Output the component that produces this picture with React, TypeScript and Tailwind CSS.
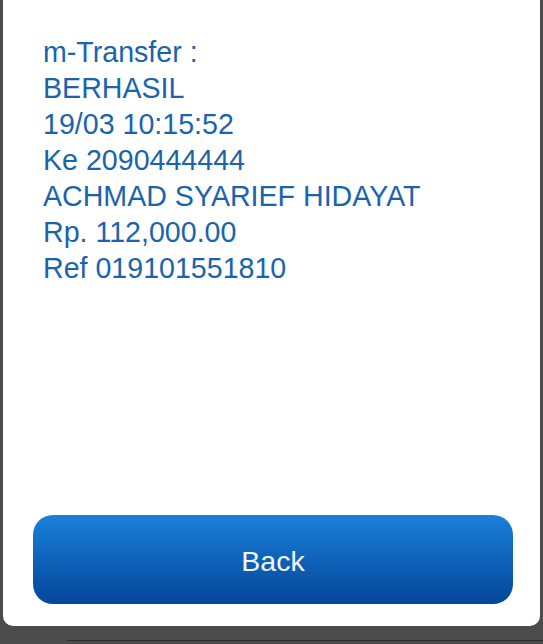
import React from 'react';

const lines = [
  'm-Transfer :',
  'BERHASIL',
  '19/03 10:15:52',
  'Ke 2090444444',
  'ACHMAD SYARIEF HIDAYAT',
  'Rp. 112,000.00',
  'Ref 019101551810',
];

export default function App() {
  return (
    <div className="w-[543px] h-[644px] bg-[#4b4b4b] flex flex-col overflow-hidden font-['Liberation_Sans',Arial,sans-serif]">
      <div className="ml-[3px] mr-[3px] h-[626px] bg-white rounded-b-[10px] flex flex-col">
        <div className="pt-[34px] pl-[40px] text-[28.6px] leading-[36px] text-[#1a64ae]">
          {lines.map((line) => (
            <div key={line}>{line}</div>
          ))}
        </div>
        <div className="flex-1" />
        <button
          type="button"
          className="ml-[30px] mr-[27px] mb-[22px] h-[89px] rounded-[20px] bg-gradient-to-b from-[#1b80d9] to-[#05469a] text-[#f2f6fb] text-[28.5px] pt-[3px] flex items-center justify-center"
        >
          Back
        </button>
      </div>
      <div className="flex-1 flex flex-col justify-end pb-[3px]">
        <div className="ml-[67px] h-px bg-[#2e2e2e]" />
      </div>
    </div>
  );
}
